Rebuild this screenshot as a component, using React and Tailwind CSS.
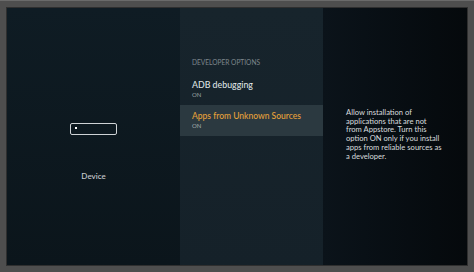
export default function App() {
  return (
    <div className="w-[474px] h-[272px] bg-[#4e4e4e] pl-[7px] pr-[7px] pt-[7px] pb-[7px] border-t border-[#6a6a6a]" style={{ fontFamily: 'Lato, "Open Sans", sans-serif' }}>
      <div className="flex h-full w-full bg-[#0b141a] shadow-[0_0_0_1px_#2f2f2f]">
        {/* left: device */}
        <div className="w-[173px] h-full flex flex-col items-center pt-[115px] bg-gradient-to-b from-[#0f1c24] to-[#0b151b]">
          <div className="relative w-[47px] h-[12px] border border-[#cfd3d6] rounded-[2px]">
            <div className="absolute left-[4px] top-[3px] w-[2px] h-[2px] bg-white" />
          </div>
          <div className="mt-[35px] text-[8px] leading-[12px] text-[#c9cdd0] font-medium">Device</div>
        </div>

        {/* middle: options */}
        <div className="w-[143px] h-full flex flex-col pt-[48px] bg-gradient-to-b from-[#17242c] to-[#152129]">
          <div className="px-[12px] h-[12px] leading-[12px] text-[6.6px] text-[#7e878d] whitespace-nowrap">DEVELOPER OPTIONS</div>
          <div className="mt-[6px] h-[31px] px-[12px] pt-[5px]">
            <div className="text-[8.8px] leading-[12px] text-[#dfe2e4] font-medium whitespace-nowrap">ADB debugging</div>
            <div className="text-[6px] leading-[8px] text-[#9aa1a6]">ON</div>
          </div>
          <div className="h-[31px] px-[12px] pt-[5px] bg-[#2b3940]">
            <div className="text-[8.5px] leading-[12px] text-[#e6a13a] font-medium whitespace-nowrap">Apps from Unknown Sources</div>
            <div className="text-[6px] leading-[8px] text-[#a3aaae]">ON</div>
          </div>
        </div>

        {/* right: description */}
        <div className="flex-1 h-full pl-[23px] pt-[100px] bg-gradient-to-r from-[#0b131a] to-[#05090c]">
          <p className="text-[7.6px] leading-[8.7px] text-[#d9dcde] whitespace-nowrap">
            Allow installation of<br />
            applications that are not<br />
            from Appstore. Turn this<br />
            option ON only if you install<br />
            apps from reliable sources as<br />
            a developer.
          </p>
        </div>
      </div>
    </div>
  )
}
